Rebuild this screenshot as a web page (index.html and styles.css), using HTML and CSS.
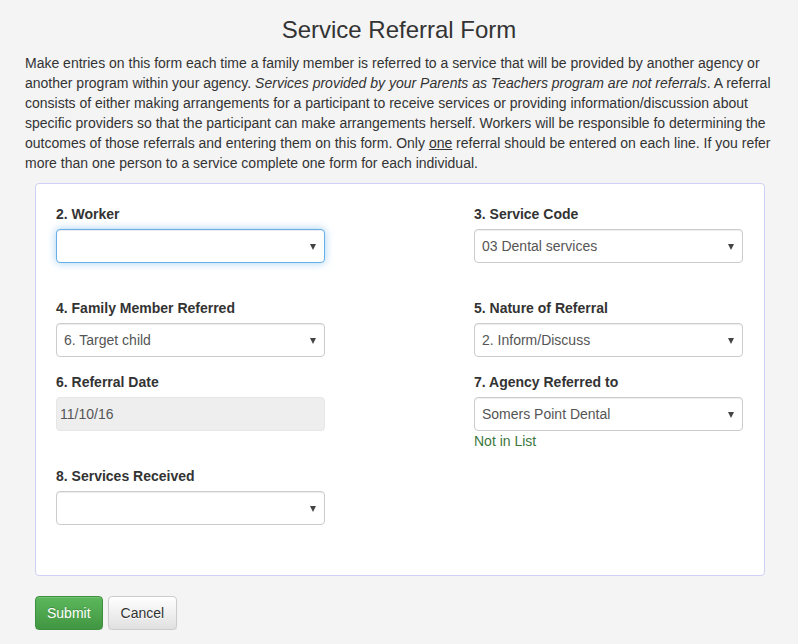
FILE: index.html
```html
<!DOCTYPE html>
<html>
<head>
<meta charset="utf-8">
<link rel="stylesheet" href="styles.css">
</head>
<body>
<div class="page">
  <h3 class="title">Service Referral Form</h3>
  <p class="intro">Make entries on this form each time a family member is referred to a service that will be provided by another agency or another program within your agency. <em>Services provided by your Parents as Teachers program are not referrals</em>. A referral consists of either making arrangements for a participant to receive services or providing information/discussion about specific providers so that the participant can make arrangements herself. Workers will be responsible fo determining the outcomes of those referrals and entering them on this form. Only <u>one</u> referral should be entered on each line. If you refer more than one person to a service complete one form for each individual.</p>
  <div class="panel">
    <div class="grid">
      <div class="group">
        <label class="lbl">2. Worker</label>
        <div class="sel focus"><span class="val"></span></div>
        <div class="help"></div>
      </div>
      <div class="group">
        <label class="lbl">3. Service Code</label>
        <div class="sel"><span class="val">03 Dental services</span></div>
        <div class="help"></div>
      </div>
      <div class="group">
        <label class="lbl">4. Family Member Referred</label>
        <div class="sel"><span class="val">6. Target child</span></div>
      </div>
      <div class="group">
        <label class="lbl">5. Nature of Referral</label>
        <div class="sel"><span class="val">2. Inform/Discuss</span></div>
      </div>
      <div class="group">
        <label class="lbl">6. Referral Date</label>
        <div class="date">11/10/16</div>
      </div>
      <div class="group">
        <label class="lbl">7. Agency Referred to</label>
        <div class="sel"><span class="val">Somers Point Dental</span></div>
        <div class="help green">Not in List</div>
      </div>
      <div class="group">
        <label class="lbl">8. Services Received</label>
        <div class="sel"><span class="val"></span></div>
      </div>
    </div>
  </div>
  <div class="actions">
    <button class="btn btn-submit">Submit</button>
    <button class="btn btn-cancel">Cancel</button>
  </div>
</div>
</body>
</html>
```
FILE: styles.css
```css
* { box-sizing: border-box; }
html, body { margin: 0; padding: 0; }
body {
  background: #f4f4f4;
  font-family: "Liberation Sans", Arial, sans-serif;
  font-size: 14px;
  line-height: 20px;
  color: #333;
}
.page { padding: 0 25px 0 25px; }
.title {
  margin: 17px 0 10px;
  font-size: 24px;
  font-weight: normal;
  line-height: 26.4px;
  text-align: center;
  color: #333;
}
.intro { margin: 0 0 10px; }
.intro u { text-decoration: underline; }
.panel {
  margin: 0 8px 0 10px;
  background: #fff;
  border: 1px solid #cfcff7;
  border-radius: 4px;
  padding: 20px 21px 35px 20px;
}
.grid {
  display: grid;
  grid-template-columns: 269px 269px;
  justify-content: space-between;
}
.group { margin-bottom: 15px; }
.lbl {
  display: block;
  font-weight: bold;
  margin-bottom: 5px;
}
.sel {
  position: relative;
  height: 34px;
  border: 1px solid #ccc;
  border-radius: 4px;
  background: #fff;
  padding: 6px 24px 6px 7px;
  color: #555;
  box-shadow: inset 0 1px 1px rgba(0,0,0,.075);
}
.sel::after {
  content: "";
  position: absolute;
  right: 8px;
  top: 14px;
  border-left: 3px solid transparent;
  border-right: 3px solid transparent;
  border-top: 6px solid #444;
}
.sel.focus {
  border-color: #66afe9;
  box-shadow: inset 0 1px 1px rgba(0,0,0,.075), 0 0 8px rgba(102,175,233,.6);
}
.val { display: block; white-space: nowrap; }
.date {
  height: 34px;
  border: 1px solid #e6e6e6;
  border-radius: 4px;
  background: #eee;
  padding: 6px 3px;
  color: #555;
}
.help { height: 20px; }
.green { color: #3c763d; }
.actions {
  display: flex;
  gap: 5px;
  margin: 20px 0 0 10px;
}
.btn {
  font-family: "Liberation Sans", Arial, sans-serif;
  font-size: 14px;
  line-height: 20px;
  padding: 6px 11px;
  border-radius: 4px;
  height: 34px;
  margin: 0;
  cursor: pointer;
}
.btn-submit {
  color: #fff;
  border: 1px solid #3e8f3e;
  background: linear-gradient(to bottom, #5cb85c 0%, #419641 100%);
  text-shadow: 0 -1px 0 rgba(0,0,0,.2);
  box-shadow: inset 0 1px 0 rgba(255,255,255,.15), 0 1px 1px rgba(0,0,0,.075);
}
.btn-cancel {
  padding: 6px 12px;
  color: #333;
  border: 1px solid #ccc;
  background: linear-gradient(to bottom, #fff 0%, #e0e0e0 100%);
  text-shadow: 0 1px 0 #fff;
  box-shadow: inset 0 1px 0 rgba(255,255,255,.15), 0 1px 1px rgba(0,0,0,.075);
}
```
